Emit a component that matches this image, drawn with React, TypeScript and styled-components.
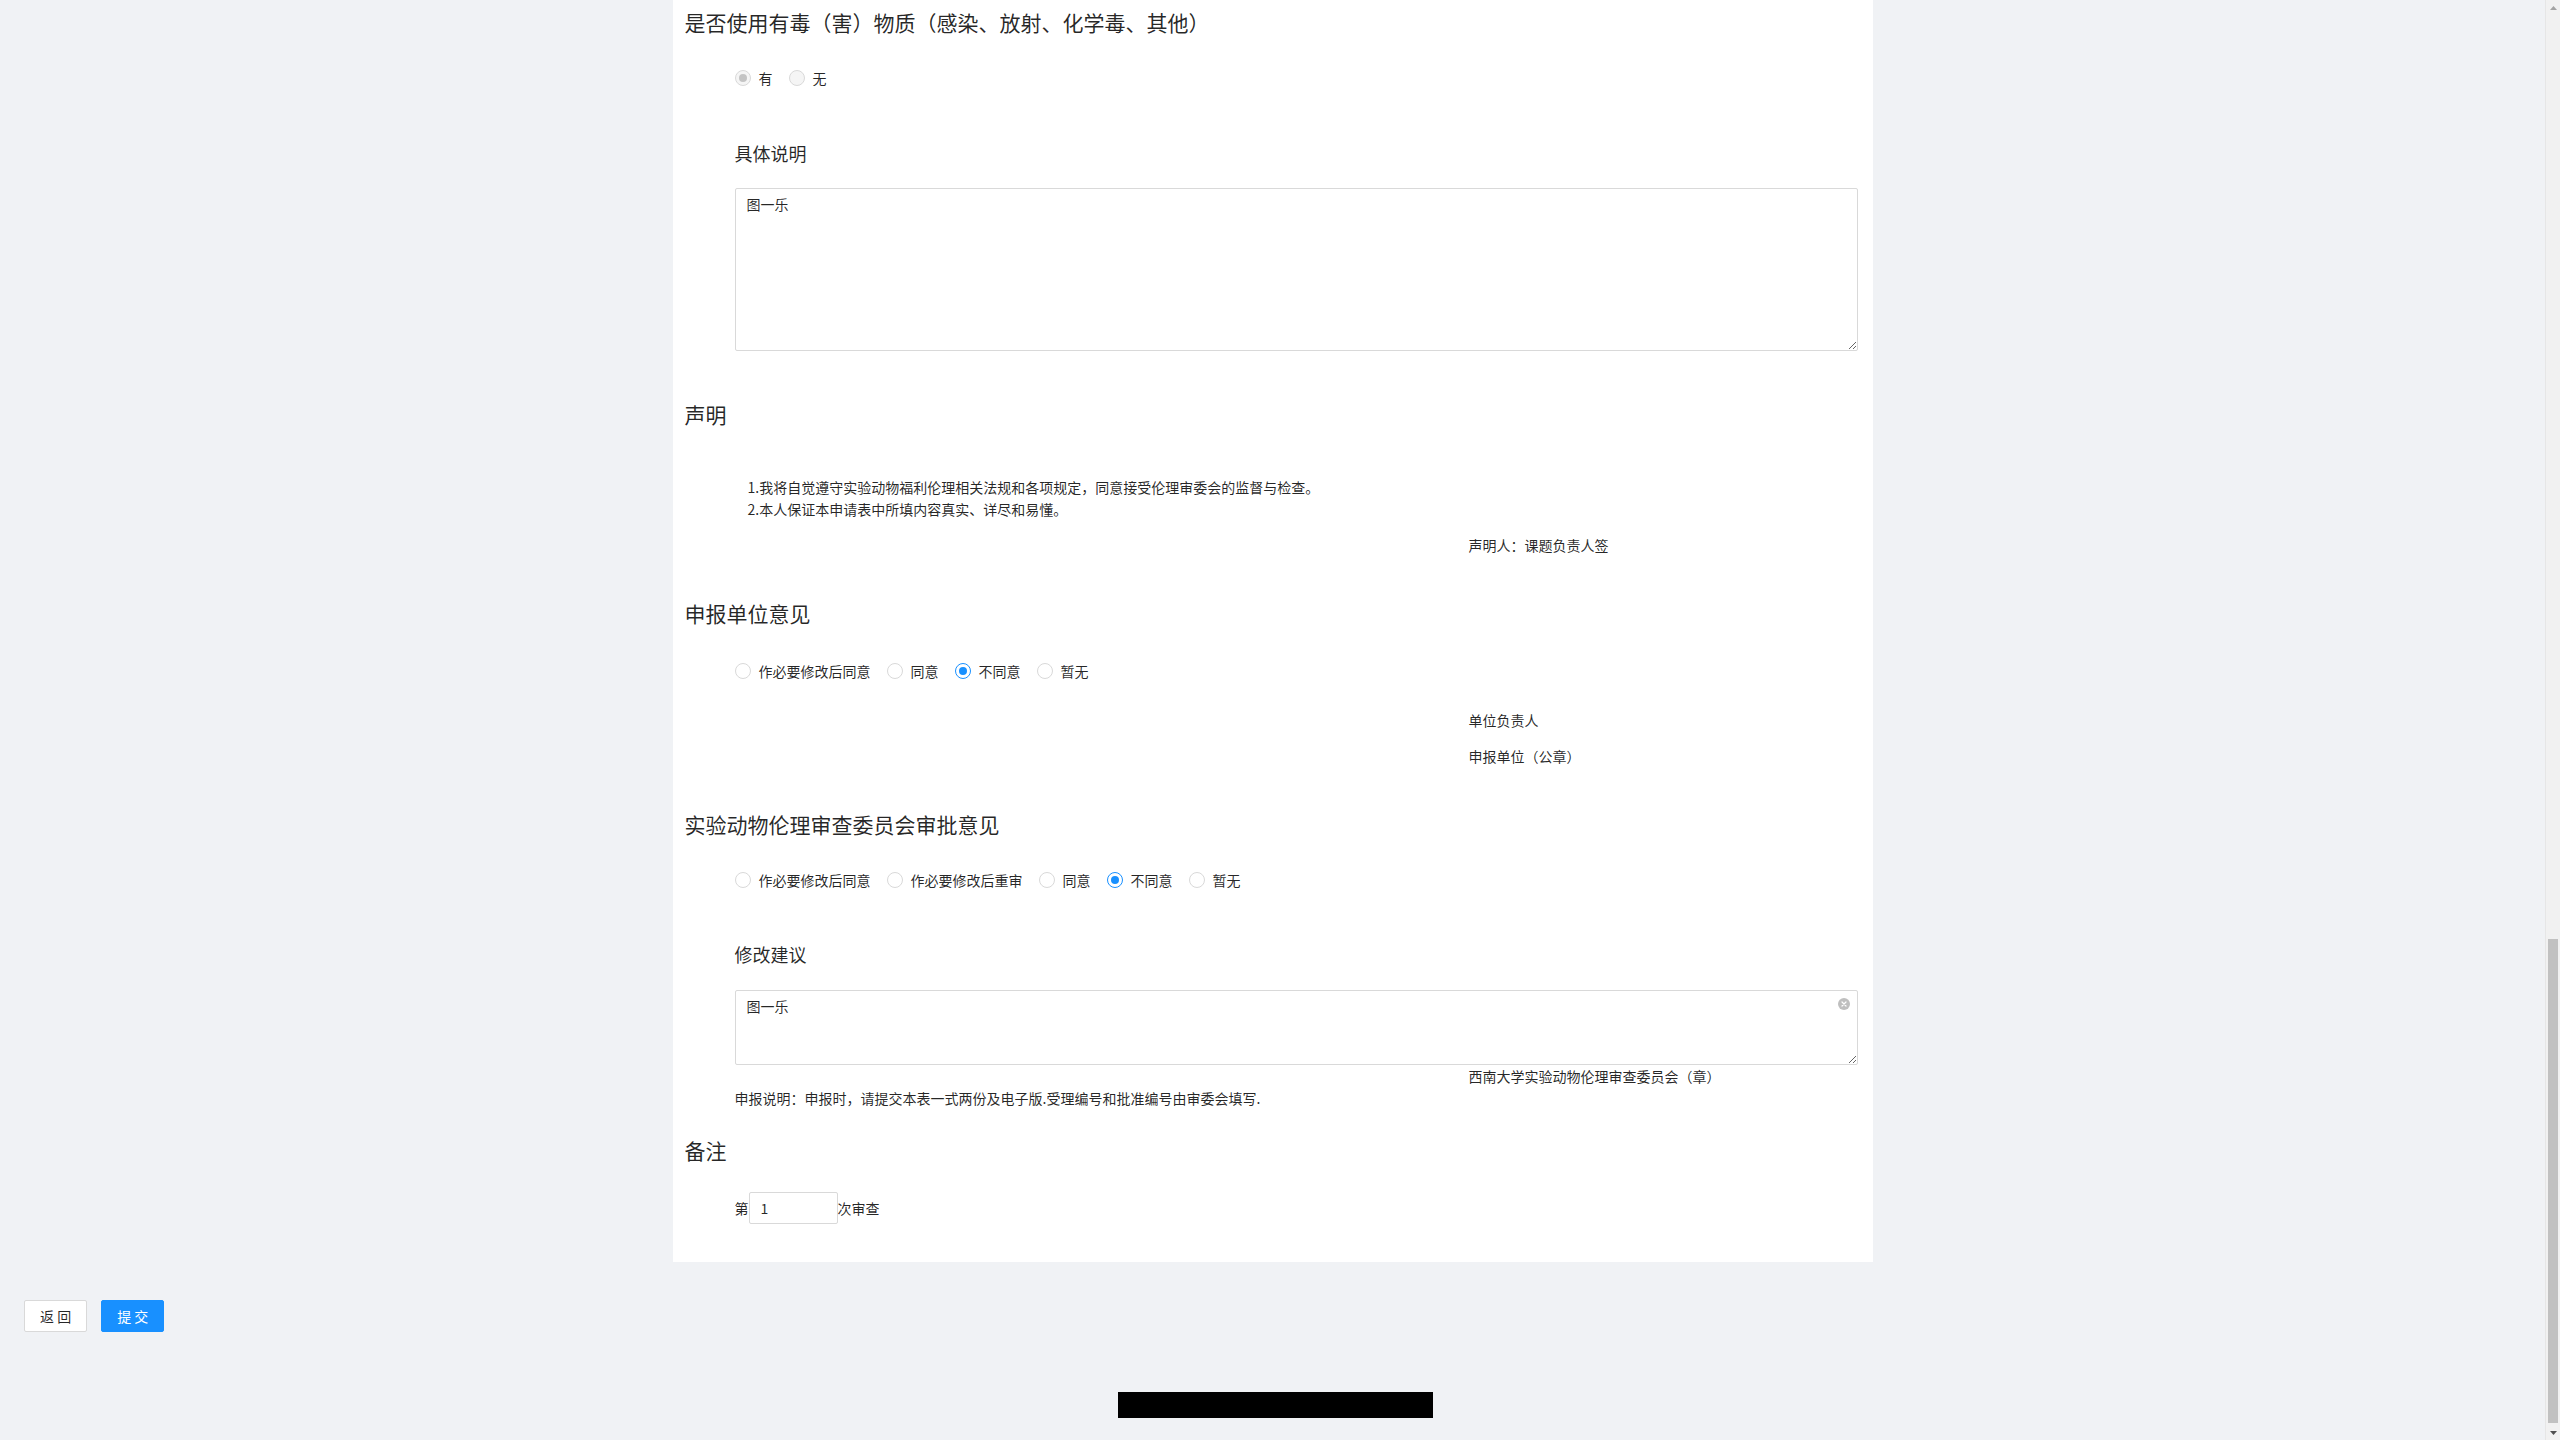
import React from "react";
import styled, { createGlobalStyle } from "styled-components";

const Global = createGlobalStyle`
  html { background: #f0f2f5; }
  body {
    margin: 0;
    background: #f0f2f5;
    font-family: "Noto Sans CJK SC", "Noto Sans", sans-serif;
    font-size: 14px;
    line-height: 22px;
    color: rgba(0, 0, 0, 0.85);
  }
  * { box-sizing: border-box; }
`;

const Page = styled.div`
  display: flex;
  flex-direction: column;
  padding-right: 15px;
`;

const Card = styled.main`
  width: 1200px;
  margin: 0 auto;
  background: #fff;
  padding: 9px 12px 38px;
  display: flex;
  flex-direction: column;
`;

const SectionTitle = styled.h3<{ $top?: number }>`
  margin: ${(p) => p.$top ?? 0}px 0 0;
  padding-bottom: 2px;
  font-size: 21px;
  line-height: 26px;
  font-weight: 400;
  color: rgba(0, 0, 0, 0.85);
`;

const SubLabel = styled.div<{ $top?: number }>`
  margin: ${(p) => p.$top ?? 0}px 3px 0 50px;
  font-size: 18px;
  line-height: 26px;
  color: rgba(0, 0, 0, 0.85);
`;

const RadioGroup = styled.div<{ $top?: number }>`
  display: flex;
  align-items: center;
  margin: ${(p) => p.$top ?? 0}px 0 0 50px;
  font-size: 14px;
  line-height: 22px;
`;

const RadioWrap = styled.label`
  display: inline-flex;
  align-items: center;
  margin-right: 8px;
  cursor: pointer;
`;

const RadioCircle = styled.span<{ $checked?: boolean; $disabled?: boolean }>`
  position: relative;
  display: block;
  width: 16px;
  height: 16px;
  border-radius: 50%;
  border: 1px solid
    ${(p) => (p.$disabled ? "#d9d9d9" : p.$checked ? "#1890ff" : "#d9d9d9")};
  background: ${(p) => (p.$disabled ? "#f5f5f5" : "#fff")};
  &::after {
    content: "";
    position: absolute;
    top: 3px;
    left: 3px;
    width: 8px;
    height: 8px;
    border-radius: 50%;
    background: ${(p) => (p.$disabled ? "rgba(0,0,0,0.2)" : "#1890ff")};
    opacity: ${(p) => (p.$checked ? 1 : 0)};
  }
`;

const RadioText = styled.span`
  padding: 0 8px;
  color: rgba(0, 0, 0, 0.85);
`;

const TextAreaBox = styled.div<{ $top?: number }>`
  position: relative;
  margin: ${(p) => p.$top ?? 0}px 3px 0 50px;
`;

const TextArea = styled.textarea<{ $height: number }>`
  display: block;
  width: 100%;
  height: ${(p) => p.$height}px;
  padding: 4px 11px;
  border: 1px solid #d9d9d9;
  border-radius: 2px;
  font-family: inherit;
  font-size: 14px;
  line-height: 1.5715;
  color: rgba(0, 0, 0, 0.85);
  background: #fff;
  resize: vertical;
  outline: none;
`;

const ClearIcon = styled.span`
  position: absolute;
  top: 8px;
  right: 8px;
  width: 12px;
  height: 12px;
  display: flex;
`;

const DeclList = styled.ol<{ $top?: number }>`
  margin: ${(p) => p.$top ?? 0}px 3px 0 63px;
  padding: 0;
  list-style: none;
  font-size: 14px;
  line-height: 22px;
`;

const Signature = styled.div<{ $top?: number }>`
  margin: ${(p) => p.$top ?? 0}px 0 0 66.6667%;
  font-size: 14px;
  line-height: 22px;
`;

const Note = styled.div`
  margin: 0 3px 0 50px;
  font-size: 14px;
  line-height: 22px;
`;

const RoundRow = styled.div<{ $top?: number }>`
  display: flex;
  align-items: center;
  margin: ${(p) => p.$top ?? 0}px 0 0 50px;
  font-size: 14px;
`;

const NumberInput = styled.input`
  width: 89px;
  height: 32px;
  padding: 4px 11px;
  border: 1px solid #d9d9d9;
  border-radius: 2px;
  font-family: inherit;
  font-size: 14px;
  color: rgba(0, 0, 0, 0.85);
  outline: none;
`;

const ButtonRow = styled.div`
  display: flex;
  gap: 14px;
  margin-top: 38px;
  padding-left: 24px;
`;

const Button = styled.button<{ $primary?: boolean }>`
  height: 32px;
  padding: 4px 15px;
  border-radius: 2px;
  border: 1px solid ${(p) => (p.$primary ? "#1890ff" : "#d9d9d9")};
  background: ${(p) => (p.$primary ? "#1890ff" : "#fff")};
  color: ${(p) => (p.$primary ? "#fff" : "rgba(0,0,0,0.85)")};
  font-family: inherit;
  font-size: 14px;
  line-height: 22px;
  cursor: pointer;
`;

const Footer = styled.div`
  display: flex;
  justify-content: center;
  margin-top: 60px;
  padding: 0 0 22px 6px;
`;

const Redacted = styled.div`
  width: 315px;
  height: 26px;
  background: #000;
`;

const ScrollTrack = styled.div`
  position: fixed;
  top: 0;
  right: 0;
  width: 15px;
  height: 100vh;
  background: #f1f1f1;
  border-left: 1px solid #e6e6e6;
`;

const ScrollArrow = styled.div<{ $down?: boolean }>`
  position: absolute;
  left: 0;
  right: 0;
  height: 15px;
  ${(p) => (p.$down ? "bottom: 0;" : "top: 0;")}
  display: flex;
  align-items: center;
  justify-content: center;
`;

const ScrollThumb = styled.div`
  position: absolute;
  left: 2px;
  right: 2px;
  top: 939px;
  bottom: 17px;
  background: #c1c1c1;
`;

type Opt = { label: string; checked?: boolean };

function Radios({ options, top, disabled }: { options: Opt[]; top: number; disabled?: boolean }) {
  return (
    <RadioGroup $top={top}>
      {options.map((o) => (
        <RadioWrap key={o.label}>
          <RadioCircle $checked={o.checked} $disabled={disabled} />
          <RadioText>{o.label}</RadioText>
        </RadioWrap>
      ))}
    </RadioGroup>
  );
}

export default function App() {
  return (
    <Page>
      <Global />
      <Card>
        <SectionTitle>是否使用有毒（害）物质（感染、放射、化学毒、其他）</SectionTitle>
        <Radios
          top={30}
          disabled
          options={[{ label: "有", checked: true }, { label: "无" }]}
        />
        <SubLabel $top={51}>具体说明</SubLabel>
        <TextAreaBox $top={22}>
          <TextArea $height={163} defaultValue="图一乐" />
        </TextAreaBox>

        <SectionTitle $top={50}>声明</SectionTitle>
        <DeclList $top={47}>
          <li>1.我将自觉遵守实验动物福利伦理相关法规和各项规定，同意接受伦理审委会的监督与检查。</li>
          <li>2.本人保证本申请表中所填内容真实、详尽和易懂。</li>
        </DeclList>
        <Signature $top={14}>声明人：课题负责人签</Signature>

        <SectionTitle $top={44}>申报单位意见</SectionTitle>
        <Radios
          top={32}
          options={[
            { label: "作必要修改后同意" },
            { label: "同意" },
            { label: "不同意", checked: true },
            { label: "暂无" },
          ]}
        />
        <Signature $top={27}>单位负责人</Signature>
        <Signature $top={14}>申报单位（公章）</Signature>

        <SectionTitle $top={44}>实验动物伦理审查委员会审批意见</SectionTitle>
        <Radios
          top={30}
          options={[
            { label: "作必要修改后同意" },
            { label: "作必要修改后重审" },
            { label: "同意" },
            { label: "不同意", checked: true },
            { label: "暂无" },
          ]}
        />
        <SubLabel $top={50}>修改建议</SubLabel>
        <TextAreaBox $top={23}>
          <TextArea $height={75} defaultValue="图一乐" />
          <ClearIcon>
            <svg width="12" height="12" viewBox="0 0 12 12">
              <circle cx="6" cy="6" r="6" fill="#bfbfbf" />
              <path d="M4 4 L8 8 M8 4 L4 8" stroke="#fff" strokeWidth="1.2" strokeLinecap="round" />
            </svg>
          </ClearIcon>
        </TextAreaBox>
        <Signature>西南大学实验动物伦理审查委员会（章）</Signature>
        <Note>申报说明：申报时，请提交本表一式两份及电子版.受理编号和批准编号由审委会填写.</Note>

        <SectionTitle $top={28}>备注</SectionTitle>
        <RoundRow $top={27}>
          <span>第</span>
          <NumberInput defaultValue="1" />
          <span>次审查</span>
        </RoundRow>
      </Card>

      <ButtonRow>
        <Button>返 回</Button>
        <Button $primary>提 交</Button>
      </ButtonRow>

      <Footer>
        <Redacted />
      </Footer>

      <ScrollTrack>
        <ScrollArrow>
          <svg width="7" height="4" viewBox="0 0 7 4">
            <path d="M0 4 L3.5 0 L7 4 Z" fill="#a3a3a3" />
          </svg>
        </ScrollArrow>
        <ScrollThumb />
        <ScrollArrow $down>
          <svg width="7" height="4" viewBox="0 0 7 4">
            <path d="M0 0 L3.5 4 L7 0 Z" fill="#505050" />
          </svg>
        </ScrollArrow>
      </ScrollTrack>
    </Page>
  );
}
